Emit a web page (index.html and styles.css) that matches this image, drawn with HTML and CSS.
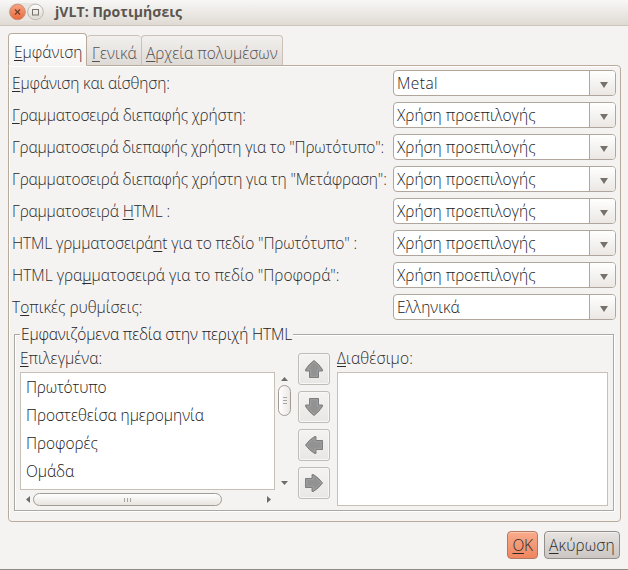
FILE: index.html
```html
<!DOCTYPE html>
<html lang="el">
<head>
<meta charset="utf-8">
<title>jVLT: Προτιμήσεις</title>
<link rel="stylesheet" href="styles.css">
</head>
<body>
<div class="window">
  <header class="titlebar">
    <div class="controls">
      <svg width="36" height="20" viewBox="0 0 36 20">
        <defs>
          <linearGradient id="close" x1="0" y1="0" x2="0" y2="1"><stop offset="0" stop-color="#f8a482"/><stop offset="1" stop-color="#e9683a"/></linearGradient>
          <linearGradient id="max" x1="0" y1="0" x2="0" y2="1"><stop offset="0" stop-color="#fdfdfc"/><stop offset="1" stop-color="#dcd8d2"/></linearGradient>
        </defs>
        <rect y="1" width="36" height="18" rx="9" fill="#e9e6e1"/>
        <circle cx="9.5" cy="10" r="7.8" fill="url(#close)" stroke="#c98f78"/>
        <path d="M7 7.5l5 5M12 7.5l-5 5" stroke="#70402c" stroke-width="1.3"/>
        <circle cx="27.5" cy="10" r="7.8" fill="url(#max)" stroke="#bdb8b1"/>
        <rect x="24.5" y="7.5" width="6" height="5.5" fill="none" stroke="#77736c"/>
      </svg>
    </div>
    <h1 class="title">jVLT: Προτιμήσεις</h1>
  </header>

  <nav class="tabs">
    <div class="tab active"><u>Ε</u>μφάνιση</div>
    <div class="tab second"><u>Γ</u>ενικά</div>
    <div class="tab third"><u>Α</u>ρχεία πολυμέσων</div>
  </nav>

  <main class="pane">
    <div class="row"><label class="tight"><u>Ε</u>μφάνιση και αίσθηση:</label><div class="combo"><span class="metal">Metal</span><i class="drop"></i></div></div>
    <div class="row"><label class="tight"><u>Γ</u>ραμματοσειρά διεπαφής χρήστη:</label><div class="combo"><span>Χρήση προεπιλογής</span><i class="drop"></i></div></div>
    <div class="row"><label class="tighter">Γραμματοσειρά διεπαφής χρήστη για το "Πρωτότυπο":</label><div class="combo"><span>Χρήση προεπιλογής</span><i class="drop"></i></div></div>
    <div class="row"><label class="tight">Γραμματοσειρά διεπαφής χρήστη για τη "Μετάφραση":</label><div class="combo"><span>Χρήση προεπιλογής</span><i class="drop"></i></div></div>
    <div class="row"><label class="tight">Γραμματοσειρά <u>H</u>TML :</label><div class="combo"><span>Χρήση προεπιλογής</span><i class="drop"></i></div></div>
    <div class="row"><label class="tight">HTML γρμματοσειρά<u>n</u>t για το πεδίο "Πρωτότυπο" :</label><div class="combo"><span>Χρήση προεπιλογής</span><i class="drop"></i></div></div>
    <div class="row"><label>HTML γρα<u>μ</u>ματοσειρά για το πεδίο "Προφορά":</label><div class="combo"><span>Χρήση προεπιλογής</span><i class="drop"></i></div></div>
    <div class="row"><label>Τ<u>ο</u>πικές ρυθμίσεις:</label><div class="combo"><span>Ελληνικά</span><i class="drop"></i></div></div>

    <section class="group">
      <div class="group-head"><span class="legend">Εμφανιζόμενα πεδία στην περιχή HTML</span></div>
      <div class="group-body">
        <div class="column selected">
          <div class="caption"><u>Ε</u>πιλεγμένα:</div>
          <div class="scroller">
            <ul class="list">
              <li class="first">Πρωτότυπο</li>
              <li>Προστεθείσα ημερομηνία</li>
              <li>Προφορές</li>
              <li>Ομάδα</li>
            </ul>
            <div class="vbar">
              <svg width="7" height="4"><path d="M0 4L3.5 0L7 4z" fill="#6f6c68"/></svg>
              <div class="vthumb"><i></i><i></i><i></i></div>
              <svg class="end" width="7" height="4"><path d="M0 0L3.5 4L7 0z" fill="#6f6c68"/></svg>
            </div>
          </div>
          <div class="hbar">
            <svg width="4" height="7"><path d="M4 0L0 3.5L4 7z" fill="#6f6c68"/></svg>
            <div class="hthumb"><i></i><i></i><i></i></div>
            <svg class="end" width="4" height="7"><path d="M0 0L4 3.5L0 7z" fill="#6f6c68"/></svg>
          </div>
        </div>
        <div class="movers">
          <div class="mover"><svg class="up" viewBox="0 0 20 20"><path class="arrow" d="M10 1.5Q15 5 18.4 10.5V12H14.5V18.5H5.5V12H1.6V10.5Q5 5 10 1.5z"/><path class="sheen" d="M10 3Q14 6 16.8 10.8H13.3V17.3H6.7V10.8H3.2Q6 6 10 3z"/></svg></div>
          <div class="mover"><svg class="down" viewBox="0 0 20 20"><path class="arrow" d="M10 1.5Q15 5 18.4 10.5V12H14.5V18.5H5.5V12H1.6V10.5Q5 5 10 1.5z"/><path class="sheen" d="M10 3Q14 6 16.8 10.8H13.3V17.3H6.7V10.8H3.2Q6 6 10 3z"/></svg></div>
          <div class="mover"><svg class="left" viewBox="0 0 20 20"><path class="arrow" d="M10 1.5Q15 5 18.4 10.5V12H14.5V18.5H5.5V12H1.6V10.5Q5 5 10 1.5z"/><path class="sheen" d="M10 3Q14 6 16.8 10.8H13.3V17.3H6.7V10.8H3.2Q6 6 10 3z"/></svg></div>
          <div class="mover"><svg class="right" viewBox="0 0 20 20"><path class="arrow" d="M10 1.5Q15 5 18.4 10.5V12H14.5V18.5H5.5V12H1.6V10.5Q5 5 10 1.5z"/><path class="sheen" d="M10 3Q14 6 16.8 10.8H13.3V17.3H6.7V10.8H3.2Q6 6 10 3z"/></svg></div>
        </div>
        <div class="column available">
          <div class="caption wide"><u>Δ</u>ιαθέσιμο:</div>
          <div class="empty"></div>
        </div>
      </div>
    </section>
  </main>

  <footer class="buttons">
    <div class="button primary"><u>O</u>K</div>
    <div class="button cancel"><u>Α</u>κύρωση</div>
  </footer>
</div>
</body>
</html>
```

FILE: styles.css
```css
* { box-sizing: border-box; }
body {
  margin: 0;
  font: 300 15.5px/20px "Open Sans", "Noto Sans", sans-serif;
  color: #2b2b2b;
  background: #f5f3f2;
}
u { text-decoration-thickness: 1px; text-underline-offset: 2px; text-decoration-skip-ink: none; }
.window {
  width: 628px; height: 570px;
  display: flex; flex-direction: column;
  border-bottom: 1px solid #8f8a83;
  white-space: nowrap;
}
.titlebar {
  height: 26px; flex: none;
  display: flex; align-items: center;
  padding: 0 0 1px 8px;
  background: linear-gradient(#f8f7f6, #dfdad3);
  border-bottom: 1px solid #cbc5bc;
}
.controls { height: 20px; width: 47px; }
.controls svg { display: block; }
.title { margin: 0; font-size: 14px; line-height: 20px; font-weight: 700; color: #5b5550; letter-spacing: .06px; }

.tabs { display: flex; align-items: flex-end; height: 40px; flex: none; padding-left: 8px; margin-bottom: -1px; z-index: 1; }
.tab {
  height: 31px; width: 142px;
  padding: 7px 0 0 4px;
  color: #55514e;
  background: linear-gradient(#f2f0ee, #dedad6);
  border: 1px solid #cbc1b7; border-bottom-color: #b9ab9c;
  border-radius: 4px 4px 0 0;
}
.tab.second { width: 54px; padding-left: 5px; border-left: 0; border-right: 0; letter-spacing: .1px; }
.tab.active {
  height: 33px; width: 79px;
  padding: 8px 0 0 5px;
  color: #2b2b2b;
  background: linear-gradient(#fff, #f6f4f3);
  border: 1px solid #b9ab9c; border-bottom-color: #f5f3f2;
}
.pane {
  margin: 0 7px 0 8px; height: 457px; flex: none;
  padding: 4px 4px 0 3px;
  border: 1px solid #b9ab9c;
  border-radius: 0 4px 4px 4px;
  box-shadow: inset 1px 1px #fff;
}
.row { display: flex; justify-content: space-between; height: 26px; margin-bottom: 6px; line-height: 26px; }
.tight { letter-spacing: -.15px; }
.tighter { letter-spacing: -.18px; }
.combo {
  width: 223px; display: flex; justify-content: space-between;
  padding-left: 3px;
  line-height: 24px;
  color: #1a1a1a;
  background: #fff;
  border: 1px solid #b1a69c; border-radius: 4px;
  overflow: hidden;
}
.metal { letter-spacing: .45px; }
.drop {
  width: 26px; display: flex; align-items: center; justify-content: center;
  padding: 4px 0 0 3px;
  background: linear-gradient(#fff, #ebe7e4);
  border-left: 1px solid #b1a69c;
}
.drop::after { content: ""; border: 4px solid transparent; border-top: 6px solid #77716c; border-bottom: 0; }

.group {
  width: 600px; height: 177px; margin: 14px 0 0 2px;
  border: 1px solid #a9a8a2;
  box-shadow: 1px 1px #fff, inset 1px 1px #fff;
}
.group-head { display: flex; height: 20px; margin-top: -11px; padding-left: 5px; }
.legend { padding: 0 1px; width: 273px; letter-spacing: -.16px; color: #1a1a1a; background: #f5f3f2; }
.group-body { display: flex; padding: 4px 5px 0 5px; }
.caption { height: 24px; line-height: 21px; }
.caption.wide { letter-spacing: .15px; }
.selected { width: 278px; }
.scroller { display: flex; }
.list {
  width: 255px; height: 118px; margin: 0; padding: 0 0 0 5px;
  list-style: none; color: #1a1a1a;
  background: #fff; border: 1px solid #c8c0b6;
}
.list li { height: 28px; line-height: 28px; letter-spacing: -.05px; }
.list .first { letter-spacing: -.2px; }
.vbar { width: 19px; height: 118px; display: flex; flex-direction: column; align-items: center; padding-top: 5px; }
.vthumb, .hthumb { display: flex; align-items: center; justify-content: center; gap: 2px; border: 1px solid #a19b93; }
.vthumb { flex-direction: column; width: 13px; height: 31px; margin-top: 4px; border-radius: 7px; background: linear-gradient(90deg, #fff, #ebe7e4); }
.vthumb i { width: 4px; height: 1px; background: #aaa49e; }
.vbar .end { margin: auto 0 5px; }
.hbar { width: 255px; height: 19px; display: flex; align-items: center; padding: 0 4px 0 6px; }
.hthumb { width: 189px; height: 13px; margin-left: 3px; border-radius: 7px; background: linear-gradient(#fff, #e8e4e0); }
.hthumb i { width: 1px; height: 4px; background: #aaa49e; }
.hbar .end { margin-left: auto; }
.movers { width: 39px; display: flex; flex-direction: column; gap: 6px; padding-top: 5px; }
.mover {
  width: 32px; height: 32px; display: flex; align-items: center; justify-content: center;
  border: 1px solid #bfbbb7; border-radius: 3px;
  background: linear-gradient(#f5f3f2, #e9e7e5);
  box-shadow: inset 0 0 0 1px #f8f7f6;
}
.mover svg { width: 20px; height: 20px; display: block; }
.arrow { fill: #8f8f8f; stroke: #7e7e7e; }
.sheen { fill: #929292; stroke: #a5a5a5; stroke-width: .8; }
.down { transform: rotate(180deg); }
.left { transform: rotate(-90deg); }
.right { transform: rotate(90deg); }
.available { width: 271px; }
.empty { height: 134px; background: #fff; border: 1px solid #c8c0b6; }

.buttons { display: flex; justify-content: flex-end; gap: 6px; padding: 9px 8px 0 0; }
.button {
  height: 28px; line-height: 26px; text-align: center;
  border: 1px solid #938e88; border-radius: 4px;
  background: linear-gradient(#e6e3e1, #cbc6c2);
  box-shadow: inset 0 1px #f3f1f0;
}
.cancel { width: 76px; letter-spacing: .15px; }
.primary { width: 31px; letter-spacing: -.4px; background: linear-gradient(#f8ab8c, #ef8660); border-color: #b37860; box-shadow: inset 0 1px #fbc6b0; }
```
